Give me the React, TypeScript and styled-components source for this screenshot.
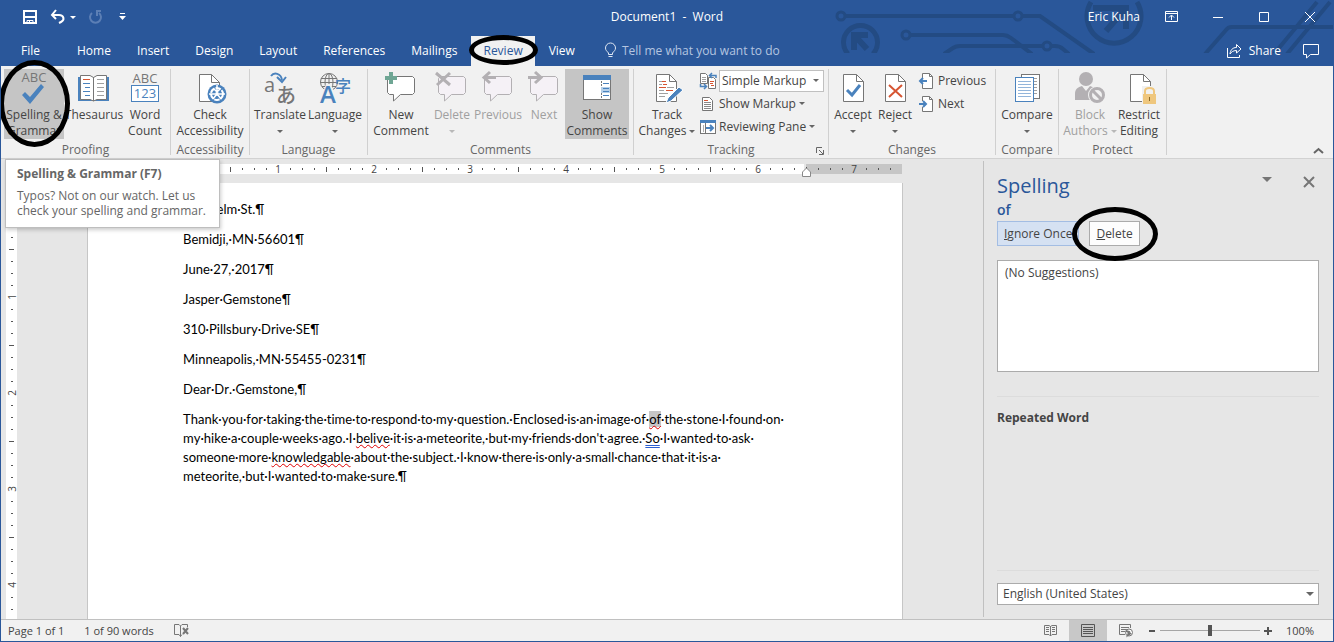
import React from "react";
import styled, { createGlobalStyle } from "styled-components";

const blue = "#2a579a";
const accent = "#4a82bd";
const grey = "#767676";

const GlobalStyle = createGlobalStyle`
  *, *::before, *::after { box-sizing: border-box; }
  body { margin: 0; }
  body, button, select, input {
    font-family: "Open Sans", "Noto Sans", sans-serif;
    font-size: 12px;
    line-height: 16px;
    color: #444;
  }
  button { background: none; border: 0; padding: 0; margin: 0; white-space: nowrap; }
  h1, h2, h3, p { margin: 0; font-weight: 400; }
  svg { display: block; flex: none; overflow: visible; }
`;

/* ---------- window and title bar ---------- */

const Window = styled.div`
  min-height: 100vh;
  display: flex;
  flex-direction: column;
  border: solid ${blue};
  border-width: 0 1px 1px;
  background: #e6e6e6;
  position: relative;
  overflow: hidden;
`;

const Header = styled.header`
  background: ${blue};
  position: relative;
`;

const Circuit = styled.svg`
  position: absolute;
  top: 0;
  right: -1px;
  overflow: hidden;
`;

const TitleBar = styled.div`
  position: relative;
  display: grid;
  grid-template-columns: 1fr auto 1fr;
  align-items: center;
  height: 34px;
`;

const QuickAccess = styled.div`
  display: flex;
  align-items: center;
  gap: 12px;
  padding-left: 21px;
`;

const Title = styled.h1`
  color: #fff;
  font-size: 12px;
  white-space: pre;
`;

const WindowControls = styled.div`
  display: flex;
  align-items: center;
  justify-content: flex-end;
`;

const Account = styled.button`
  color: #fff;
  margin-right: 9px;
`;

const WindowButton = styled.button`
  display: grid;
  place-items: center;
  width: 46px;
  height: 32px;
`;

const TabRow = styled.div`
  position: relative;
  display: flex;
  gap: 2px;
  height: 32px;
  padding: 2px 13px 0 0;
`;

const Tab = styled.button<{ $active?: boolean; $wide?: boolean }>`
  position: relative;
  color: ${(p) => (p.$active ? blue : "#fff")};
  background: ${(p) => (p.$active ? "#f1f1f1" : "transparent")};
  padding: 0 ${(p) => (p.$wide ? 20 : 12)}px;
  margin-right: ${(p) => (p.$wide ? 3 : 0)}px;
`;

const TellMe = styled.button`
  display: flex;
  align-items: center;
  gap: 6px;
  margin-left: 16px;
  color: #b4c5e0;
`;

const TabActions = styled.div`
  display: flex;
  align-items: center;
  gap: 22px;
  margin-left: auto;
`;

const ShareButton = styled.button`
  display: flex;
  align-items: center;
  gap: 7px;
  color: #fff;
`;

/* ---------- ribbon ---------- */

const Ribbon = styled.div`
  position: relative;
  display: flex;
  height: 93px;
  padding-top: 3px;
  background: #f1f1f1;
  border-bottom: 1px solid #d2d2d2;
`;

const Group = styled.section<{ $width: number }>`
  position: relative;
  flex: none;
  width: ${(p) => p.$width}px;
  height: 86px;
  padding: 0 3px;
  border-right: 1px solid #d0d0d0;
`;

const GroupItems = styled.div<{ $center?: boolean }>`
  display: flex;
  height: 70px;
  justify-content: ${(p) => (p.$center ? "center" : "flex-start")};
`;

const GroupName = styled.h2`
  height: 16px;
  margin-top: 3px;
  font-size: 12px;
  text-align: center;
  color: #666;
`;

const BigButton = styled.button<{ $width: number; $on?: boolean }>`
  position: relative;
  display: flex;
  flex-direction: column;
  align-items: center;
  flex: none;
  width: ${(p) => p.$width}px;
  height: 70px;
  padding-top: 3px;
  background: ${(p) => (p.$on ? "#c5c5c5" : "transparent")};
  &:disabled { color: #a0a0a0; }
`;

const BigLabel = styled.span`
  display: flex;
  flex-direction: column;
  align-items: center;
  margin-top: 3px;
`;

const LabelLine = styled.span`
  display: flex;
  align-items: center;
  justify-content: center;
  gap: 3px;
  height: 16px;
`;

const SmallColumn = styled.div`
  display: flex;
  flex-direction: column;
  padding-left: 3px;
`;

const SmallRow = styled.div`
  display: flex;
  align-items: center;
  gap: 3px;
  height: 23px;
`;

const SmallButton = styled.button<{ $gap?: number }>`
  display: flex;
  align-items: center;
  gap: ${(p) => p.$gap ?? 3}px;
`;

const SelectBox = styled.div<{ $tone: string }>`
  position: relative;
  display: flex;
  align-items: center;
  background: #fff;
  border: 1px solid ${(p) => p.$tone};
`;

const Select = styled.select<{ $inset: number }>`
  appearance: none;
  width: 100%;
  height: 20px;
  padding: 0 16px 0 ${(p) => p.$inset}px;
  border: 0;
  background: transparent;
  color: #444;
`;

const SelectArrow = styled.span`
  position: absolute;
  right: 4px;
  pointer-events: none;
`;

const Launcher = styled.button`
  position: absolute;
  right: 4px;
  bottom: 0;
`;

const CollapseButton = styled.button`
  align-self: flex-end;
  margin: 0 10px 4px auto;
`;

const Ring = styled.span<{ $x: number; $y: number; $w: number; $h: number }>`
  position: absolute;
  left: ${(p) => p.$x}px;
  top: ${(p) => p.$y}px;
  width: ${(p) => p.$w}px;
  height: ${(p) => p.$h}px;
  border: 5px solid #000;
  border-radius: 50%;
  pointer-events: none;
  z-index: 3;
`;

const Tooltip = styled.div`
  position: absolute;
  top: 93px;
  left: 4px;
  z-index: 2;
  width: 215px;
  height: 69px;
  padding: 6px 11px;
  background: #fff;
  border: 1px solid #bebebe;
  box-shadow: 1px 2px 4px rgba(0, 0, 0, 0.2);
  color: #666;
  line-height: 15px;
  white-space: nowrap;
`;

const TooltipTitle = styled.h3`
  font-size: 12px;
  font-weight: 700;
  line-height: 16px;
  margin-bottom: 6px;
`;

/* ---------- document ---------- */

const Body = styled.div`
  flex: 1;
  display: flex;
  min-height: 0;
`;

const Workspace = styled.main`
  flex: 1;
  display: flex;
  padding-left: 5px;
`;

const VerticalRuler = styled.div`
  width: 11px;
  flex: none;
  margin-top: 24px;
  padding-top: 12px;
  background: #fff;
`;

const Canvas = styled.div`
  flex: 1;
  display: flex;
  flex-direction: column;
  align-items: center;
  padding: 5px 10px 0 0;
`;

const HorizontalRuler = styled.div`
  position: relative;
  display: flex;
  width: 814px;
  height: 10px;
  padding-left: 4px;
  background: linear-gradient(to right, #c6c6c6 95px, #fff 95px 716px, #e6e6e6 716px 718px, #c6c6c6 718px);
`;

const Tick = styled.span<{ $vertical?: boolean }>`
  display: grid;
  place-items: center;
  flex: none;
  width: ${(p) => (p.$vertical ? 11 : 12)}px;
  height: ${(p) => (p.$vertical ? 12 : 10)}px;
  font-size: 10px;
  line-height: 10px;
  color: #444;
`;

const TurnedNumber = styled.span`
  transform: rotate(-90deg);
`;

const TickMark = styled.i<{ $w: number; $h: number }>`
  width: ${(p) => p.$w}px;
  height: ${(p) => p.$h}px;
  background: #555;
`;

const IndentMarker = styled.svg`
  position: absolute;
  right: 91px;
  top: 3px;
`;

const Page = styled.article`
  flex: 1;
  width: 816px;
  margin-top: 9px;
  padding: 17px 0 0 95px;
  background: #fff;
  border: solid #c6c6c6;
  border-width: 0 1px;
  font-family: Lato, "Open Sans", sans-serif;
  font-size: 13px;
  font-kerning: none;
  font-variant-ligatures: none;
  line-height: 19px;
  color: #000;
  white-space: nowrap;
`;

const Paragraph = styled.p`
  margin-bottom: 11px;
`;

const Misspelt = styled.span<{ $selected?: boolean }>`
  background: ${(p) => (p.$selected ? "#c6c6c6" : "transparent")};
  text-decoration: underline wavy #e00000 1px;
  text-underline-offset: 1px;
  text-decoration-skip-ink: none;
`;

const GrammarError = styled.span`
  text-decoration: underline double #2b5fd0 1px;
  text-underline-offset: 2px;
`;

/* ---------- spelling pane ---------- */

const Pane = styled.aside`
  flex: none;
  display: flex;
  flex-direction: column;
  width: 350px;
  margin: 2px 0;
  padding: 11px 14px 12px 13px;
  border-left: 1px solid #c0c0c0;
`;

const PaneHeader = styled.div`
  display: flex;
  align-items: flex-start;
  height: 28px;
  padding-right: 1px;
`;

const PaneTitle = styled.h2`
  flex: 1;
  font-size: 20px;
  line-height: 28px;
  color: ${blue};
`;

const PaneIcon = styled.button`
  padding: 5px 4px;
  margin-left: 24px;
`;

const Word = styled.h3`
  margin-top: 1px;
  font-size: 14px;
  font-weight: 600;
  line-height: 18px;
  color: ${blue};
`;

const PaneActions = styled.div`
  position: relative;
  display: flex;
  gap: 10px;
  margin-top: 2px;
`;

const ActionButton = styled.button<{ $primary?: boolean }>`
  height: 25px;
  padding: 0 6px;
  background: ${(p) => (p.$primary ? "#d5e1f2" : "#fdfdfd")};
  border: 1px solid ${(p) => (p.$primary ? "#a3bde3" : "#ababab")};
`;

const SuggestionList = styled.ul`
  height: 112px;
  margin: 14px 0 24px;
  padding: 4px 7px;
  list-style: none;
  background: #fff;
  border: 1px solid #ababab;
`;

const Explanation = styled.div`
  flex: 1;
  padding-top: 13px;
  border: solid #dcdcdc;
  border-width: 1px 0;
  margin-bottom: 12px;
`;

const ExplanationTitle = styled.h3`
  font-size: 12px;
  font-weight: 700;
`;

/* ---------- status bar ---------- */

const StatusBar = styled.footer`
  display: flex;
  align-items: center;
  height: 22px;
  padding: 0 19px 0 7px;
  background: #f1f1f1;
  border-top: 1px solid #c0c0c0;
  font-size: 11px;
  color: #555;
`;

const StatusItem = styled.button`
  font-size: 11px;
  margin-right: 20px;
`;

const ViewButton = styled.button<{ $on?: boolean }>`
  display: grid;
  place-items: center;
  width: 38px;
  height: 21px;
  background: ${(p) => (p.$on ? "#c8c8c8" : "transparent")};
`;

const Views = styled.div`
  display: flex;
  margin-left: auto;
`;

const Zoom = styled.div`
  display: flex;
  align-items: center;
  gap: 4px;
`;

const ZoomRange = styled.input`
  appearance: none;
  width: 100px;
  height: 12px;
  margin: 0;
  background: linear-gradient(#a6a6a6, #a6a6a6) center / 100% 1px no-repeat;
  &::-webkit-slider-thumb {
    appearance: none;
    width: 4px;
    height: 11px;
    background: #555;
  }
`;

const ZoomValue = styled.button`
  width: 38px;
  text-align: right;
  font-size: 11px;
`;

/* ---------- icons ---------- */

const Caret = ({ color = "#666", w = 6 }: { color?: string; w?: number }) => (
  <svg width={w} height={w / 2} viewBox="0 0 6 3"><path d="M0 0H6L3 3Z" fill={color} /></svg>
);

const Big = ({ children }: { children: React.ReactNode }) => (
  <svg width="32" height="32" viewBox="0 0 32 32" fill="none">{children}</svg>
);

const Doc = ({ stroke = grey }: { stroke?: string }) => (
  <>
    <path d="M6.5 2.5H19.5L26.5 9.5V29.5H6.5Z" fill="#fff" stroke={stroke} />
    <path d="M19.5 2.5V9.5H26.5" stroke={stroke} />
  </>
);

const SpellingIcon = () => (
  <Big>
    <text x="16" y="10" textAnchor="middle" fontSize="13" fill={grey}>ABC</text>
    <path d="M4 23L7 20L12 25L23 12L26 15L12 32Z" fill={accent} />
  </Big>
);

const ThesaurusIcon = () => (
  <Big>
    <path d="M0 5H31V29H0Z" fill={accent} />
    <path d="M2.5 3.5H12L15.5 5.5L19 3.5H28.5V27.5H19L15.5 29L12 27.5H2.5Z" fill="#fff" stroke={grey} />
    <path d="M15.5 5V29" stroke={grey} />
    <path d="M5 7.5H12" stroke="#d65532" />
    <path d="M5 11.5H12M7 15.5H12M5 19.5H12M7 23.5H12" stroke={accent} />
    <path d="M19 7.5H26M19 11.5H26M19 15.5H26M19 19.5H26M19 23.5H26" stroke="#a0a0a0" />
  </Big>
);

const WordCountIcon = () => (
  <Big>
    <text x="16" y="11" textAnchor="middle" fontSize="13" fill={grey}>ABC</text>
    <rect x="2.5" y="13.5" width="27" height="16" fill="#fff" stroke={accent} />
    <text x="16" y="26" textAnchor="middle" fontSize="13" fill={accent}>123</text>
  </Big>
);

const AccessibilityIcon = () => (
  <Big>
    <path d="M5.5 2.5H17.5L25.5 10.5V29.5H5.5Z" fill="#fff" stroke={grey} />
    <path d="M17.5 2.5V10.5H25.5" stroke={grey} />
    <circle cx="23" cy="22" r="9.5" fill={accent} />
    <circle cx="23" cy="22" r="6" stroke="#fff" strokeWidth="2" strokeDasharray="5.5 1" />
    <path d="M23 13V19M20 17L23 20L26 17M15 22H21M25 22H31M19 27L22 23M27 27L24 23" stroke="#fff" strokeWidth="1.500" />
    <circle cx="23" cy="22" r="2" fill="#fff" />
  </Big>
);

const TranslateIcon = () => (
  <Big>
    <text x="0" y="20" fontSize="20" fill={grey}>a</text>
    <text x="12" y="31" fontSize="20" fill={grey} fontFamily="'Noto Sans CJK JP', sans-serif" fontWeight="500">あ</text>
    <path d="M7 4C10 0 17 1 18 8" stroke={accent} strokeWidth="2" />
    <path d="M13 5L18 10L22 5" stroke={accent} strokeWidth="2" />
  </Big>
);

const LanguageIcon = () => (
  <Big>
    <circle cx="10" cy="10" r="8.5" stroke={grey} />
    <ellipse cx="10" cy="10" rx="4" ry="8.5" stroke={grey} />
    <path d="M10 2V18M2 6.500H18M1 10.500H19M3 14.500H17" stroke={grey} />
    <path d="M0 32L7 12H12L19 32Z" fill="#f1f1f1" />
    <text x="9" y="31" textAnchor="middle" fontSize="24" fontWeight="600" fill={accent}>A</text>
    <text x="16" y="20" fontSize="16" fill={accent} fontFamily="'Noto Sans CJK JP', sans-serif" fontWeight="500">字</text>
  </Big>
);

const Bubble = ({ stroke, fill }: { stroke: string; fill: string }) => (
  <path d="M4.500 4.500H27.500L29.500 6.500V20.500L27.500 22.500H15.500L8.500 29V22.500H4.500L2.500 20.500V6.500Z" fill={fill} stroke={stroke} />
);

const NewCommentIcon = () => (
  <Big>
    <Bubble stroke={grey} fill="#fff" />
    <path d="M4 0H8V4H12V8H8V12H4V8H0V4H4Z" fill="#6fa694" />
  </Big>
);

const fade = "#b3b0b3";

const DeleteCommentIcon = () => (
  <Big>
    <Bubble stroke={fade} fill="#f5f1f6" />
    <path d="M0 1L14 13M14 1L1 13" stroke={fade} strokeWidth="3" />
  </Big>
);

const PreviousCommentIcon = () => (
  <Big>
    <Bubble stroke={fade} fill="#f5f1f6" />
    <path d="M8 0L2 5.500L8 11M2 5.500H14" stroke={fade} strokeWidth="3" />
  </Big>
);

const NextCommentIcon = () => (
  <Big>
    <Bubble stroke={fade} fill="#f5f1f6" />
    <path d="M7 0L13 5.500L7 11M13 5.500H0" stroke={fade} strokeWidth="3" />
  </Big>
);

const ShowCommentsIcon = () => (
  <Big>
    <rect x="2.500" y="3.500" width="27" height="24" fill="#fff" stroke={grey} />
    <rect x="2" y="3" width="28" height="5" fill={accent} />
    <path d="M20.500 9V27" stroke={grey} strokeDasharray="2 1" />
    <rect x="20" y="15" width="9" height="6" fill="#b5cfe8" />
    <path d="M22 11.500H28M22 16.500H28M22 19.500H28M22 23.500H28" stroke={accent} />
  </Big>
);

const TrackIcon = () => (
  <Big>
    <path d="M5.500 2.500H18.500L25.500 9.500V29.500H5.500Z" fill="#fff" stroke={grey} />
    <path d="M18.500 2.500V9.500H25.500" stroke={grey} />
    <path d="M8 9.500H15M8 12.500H11M16 15.500H23M8 18.500H13M8 21.500H17M8 24.500H14" stroke="#a0a0a0" />
    <path d="M11 9.500H15M12 12.500H16M8 15.500H15M15 18.500H22" stroke="#d65532" />
    <path d="M15 31L17 26L28 15L32 18L20 29Z" fill={accent} stroke="#fff" strokeWidth="1" />
  </Big>
);

const AcceptIcon = () => (
  <Big><Doc /><path d="M10 18L15 23L23 13" stroke={accent} strokeWidth="3" /></Big>
);

const RejectIcon = () => (
  <Big><Doc /><path d="M10 13L23 25M23 13L10 25" stroke="#d65532" strokeWidth="2" /></Big>
);

const CompareIcon = () => (
  <Big>
    <rect x="10.500" y="2.500" width="18" height="24" fill="#fff" stroke={grey} />
    <path d="M12 6.500H26M12 9.500H26M12 12.500H26M12 15.500H26M12 18.500H26M12 21.500H26" stroke="#a0a0a0" />
    <rect x="4.500" y="5.500" width="18" height="24" fill="#fff" stroke={accent} />
    <path d="M7 9.500H20M7 12.500H20M7 15.500H20M7 18.500H20M7 21.500H20M7 24.500H20" stroke="#93b5da" />
  </Big>
);

const BlockIcon = () => (
  <Big>
    <circle cx="12" cy="7" r="7" fill={fade} />
    <path d="M1 28V22C1 17 4 15 8 14L12 19L16 14L21 16V28Z" fill={fade} />
    <circle cx="23" cy="23" r="9" fill="#f1f1f1" />
    <circle cx="23" cy="23" r="6.500" stroke={fade} strokeWidth="3" />
    <path d="M18 18L28 28" stroke={fade} strokeWidth="3" />
  </Big>
);

const RestrictIcon = () => (
  <Big>
    <path d="M7.500 2.500H20.500L27.500 9.500V29.500H7.500Z" fill="#fff" stroke={grey} />
    <path d="M20.500 2.500V9.500H27.500" stroke={grey} />
    <rect x="19" y="14" width="14" height="18" fill="#f1f1f1" />
    <rect x="20" y="22" width="13" height="10" fill="#efc77e" />
    <path d="M22 22V19C22 15 31 15 31 19V22" stroke="#efc77e" strokeWidth="2" />
    <path d="M26.500 25V29" stroke="#8a6a2a" strokeWidth="1" />
  </Big>
);

const Small = ({ children }: { children: React.ReactNode }) => (
  <svg width="16" height="16" viewBox="0 0 16 16" fill="none">{children}</svg>
);

const MarkupViewIcon = () => (
  <Small>
    <path d="M0.500 0.500H5.500L7.500 2.500V10.500H0.500Z" fill="#fff" stroke={grey} />
    <path d="M2 4.500H6M2 6.500H6M2 8.500H6" stroke="#a0a0a0" />
    <path d="M8.500 4.500H13.500L15.500 6.500V15.500H8.500Z" fill="#fff" stroke={grey} />
    <path d="M10 8.500H14M10 10.500H13M11 12.500H14" stroke="#d65532" />
    <path d="M16 5V2.500H10M12 0L9.500 2.500L12 5M0.500 11V13.500H6M4 11L6.500 13.500L4 16" stroke={accent} strokeWidth="1.500" />
  </Small>
);

const ShowMarkupIcon = () => (
  <Small>
    <path d="M2.500 1.500H9.500L12.500 4.500V14.500H2.500Z" fill="#fff" stroke={grey} />
    <path d="M4 4.500H8" stroke="#d65532" />
    <path d="M4 6.500H11M4 8.500H11M4 10.500H11M4 12.500H11" stroke="#888" />
  </Small>
);

const ReviewingPaneIcon = () => (
  <Small>
    <rect x="0.500" y="1.500" width="15" height="13" fill="#fff" stroke={grey} />
    <rect x="0" y="1" width="16" height="3" fill={accent} />
    <path d="M5.500 4V14" stroke={grey} />
    <path d="M3.500 6V13" stroke="#b0b0b0" />
    <path d="M6 9H12M10 6L13 9L10 12" stroke={accent} strokeWidth="2" />
  </Small>
);

const PreviousChangeIcon = () => (
  <Small>
    <path d="M3.500 5V0.500H10.500L13.500 3.500V15.500H3.500V11" fill="#fff" stroke={grey} />
    <path d="M10.500 0.500V3.500H13.500" stroke={grey} />
    <path d="M8 8H2M4 5L1 8L4 11" stroke={accent} strokeWidth="2" />
  </Small>
);

const NextChangeIcon = () => (
  <Small>
    <path d="M3.500 5V0.500H10.500L13.500 3.500V15.500H3.500V11" fill="#fff" stroke={grey} />
    <path d="M10.500 0.500V3.500H13.500" stroke={grey} />
    <path d="M0 8H6M4 5L7 8L4 11" stroke={accent} strokeWidth="2" />
  </Small>
);

/* ---------- composite parts ---------- */

type CommandProps = {
  icon: React.ReactNode;
  lines: string[];
  width: number;
  on?: boolean;
  disabled?: boolean;
  menu?: boolean;
};

const Command = ({ icon, lines, width, on, disabled, menu }: CommandProps) => {
  const caret = menu && <Caret color={disabled ? "#b8b8b8" : "#666"} />;
  return (
    <BigButton $width={width} $on={on} disabled={disabled}>
      {icon}
      <BigLabel>
        <LabelLine>{lines[0]}</LabelLine>
        <LabelLine>{lines[1]}{caret}</LabelLine>
      </BigLabel>
    </BigButton>
  );
};

const range = (from: number, to: number) => Array.from({ length: to - from + 1 }, (_, i) => from + i);

const RulerTick = ({ at, vertical }: { at: number; vertical?: boolean }) => {
  if (at !== 0 && at % 8 === 0) {
    const n = Math.abs(at / 8);
    return <Tick $vertical={vertical}>{vertical ? <TurnedNumber>{n}</TurnedNumber> : n}</Tick>;
  }
  const length = at % 4 === 0 ? 5 : 2;
  return (
    <Tick $vertical={vertical}>
      <TickMark $w={vertical ? length : 1} $h={vertical ? 1 : length} />
    </Tick>
  );
};

const address = [
  "1500·elm·St.¶",
  "Bemidji,·MN·56601¶",
  "June·27,·2017¶",
  "Jasper·Gemstone¶",
  "310·Pillsbury·Drive·SE¶",
  "Minneapolis,·MN·55455-0231¶",
  "Dear·Dr.·Gemstone,¶",
];

export default function App() {
  return (
    <Window>
      <GlobalStyle />
      <Header>
        <Circuit width="554" height="53" viewBox="0 0 554 53" fill="none" stroke="#234b83" strokeWidth="4">
          <g strokeWidth="3">
            <circle cx="61" cy="16" r="4" />
            <circle cx="238" cy="16" r="4" />
            <circle cx="126" cy="35" r="4" />
            <circle cx="267" cy="46" r="4" />
          </g>
          <path d="M65 16H234M242 16H260L314 54M130 35H223Q227 35 231 38L252 54M164 54L173 48Q176 46 180 46H263M271 46H275Q280 46 283 49L289 54" />
          <path d="M68 54A17 17 0 1 1 93 54M311 2A27 27 0 1 0 357 2" strokeWidth="5" />
          <path d="M74 50V35H88M75 36L87 49M313 8H346V29M344 10L326 31" strokeWidth="6" />
          <path d="M425 54L446 30Q448 27 452 27H554M494 54L537 2M507 54L550 2" />
        </Circuit>
        <TitleBar>
          <QuickAccess>
            <button aria-label="Save">
              <svg width="16" height="16" viewBox="0 0 16 16" fill="none" stroke="#fff">
                <path d="M2 2H14V14H2Z" strokeWidth="2" />
                <path d="M2 8H14" strokeWidth="2" />
                <path d="M5 14V11.500H11V14" strokeWidth="1" /><path d="M7.500 11V14" strokeWidth="1" />
              </svg>
            </button>
            <SmallButton aria-label="Undo" $gap={5}>
              <svg width="15" height="14" viewBox="0 0 15 14" fill="none" stroke="#fff" strokeWidth="2">
                <path d="M6 0L2 5L6 9M2 5H9C14 5 15 10 11 12L9 13" />
              </svg>
              <Caret color="#fff" />
            </SmallButton>
            <button aria-label="Repeat">
              <svg width="15" height="15" viewBox="0 0 15 15" fill="none" stroke="#5c7fb5" strokeWidth="2">
                <path d="M4 3A5.500 5.500 0 1 0 11 3M8 1H13M9 1V6" />
              </svg>
            </button>
            <button aria-label="Customize Quick Access Toolbar">
              <svg width="16" height="8" viewBox="0 0 16 8" fill="#fff"><path d="M5 0H10V1H5ZM4 3H11L7.500 7Z" /></svg>
            </button>
          </QuickAccess>
          <Title>{"Document1  -  Word"}</Title>
          <WindowControls>
            <Account>Eric Kuha</Account>
            <WindowButton aria-label="Ribbon Display Options">
              <svg width="14" height="12" viewBox="0 0 14 12" fill="none" stroke="#fff">
                <path d="M0.500 0.500H12.500V10.500H0.500ZM0.500 2.500H12.500M6.500 9V4.500M4 6.500L6.500 4L9 6.500" />
              </svg>
            </WindowButton>
            <WindowButton aria-label="Minimize">
              <svg width="10" height="1"><path d="M0 0H10V1H0Z" fill="#fff" /></svg>
            </WindowButton>
            <WindowButton aria-label="Maximize">
              <svg width="10" height="10" fill="none" stroke="#fff"><path d="M0.500 0.500H9.500V9.500H0.500Z" /></svg>
            </WindowButton>
            <WindowButton aria-label="Close">
              <svg width="10" height="10" fill="none" stroke="#fff"><path d="M0 0L10 10M10 0L0 10" /></svg>
            </WindowButton>
          </WindowControls>
        </TitleBar>
        <TabRow>
          <Tab $wide>File</Tab>
          {["Home", "Insert", "Design", "Layout", "References", "Mailings"].map((t) => <Tab key={t}>{t}</Tab>)}
          <Tab $active>Review<Ring $x={-2} $y={-1} $w={69} $h={30} /></Tab>
          <Tab>View</Tab>
          <TellMe>
            <svg width="11" height="16" viewBox="0 0 11 16" fill="none" stroke="#dfe7f3">
              <path d="M3.500 11.500V10C2 8 0.500 7.500 0.500 5A4.800 4.800 0 0 1 10.500 5C10.500 7.500 9 8 7.500 10V11.500ZM3.500 13.500H7.500" />
            </svg>
            Tell me what you want to do
          </TellMe>
          <TabActions>
            <ShareButton>
              <svg width="15" height="15" viewBox="0 0 15 15" fill="none" stroke="#fff">
                <path d="M0.500 4V13.500H12.500V11M9.500 0.500L14 5L9.500 9V6.500C6 6.500 4.500 8 3 10C3.500 6 5.500 3.500 9.500 3.500Z" />
              </svg>
              Share
            </ShareButton>
            <button aria-label="Comments">
              <svg width="17" height="15" viewBox="0 0 17 15" fill="none" stroke="#fff"><path d="M0.500 0.500H15.500V10.500H7.500L3.500 14V10.500H0.500Z" /></svg>
            </button>
          </TabActions>
        </TabRow>
      </Header>

      <Ribbon>
        <Group $width={170}>
          <GroupItems>
            <Command width={60} on icon={<SpellingIcon />} lines={["Spelling &", "Grammar"]} />
            <Command width={60} icon={<ThesaurusIcon />} lines={["Thesaurus", ""]} />
            <Command width={42} icon={<WordCountIcon />} lines={["Word", "Count"]} />
          </GroupItems>
          <GroupName>Proofing</GroupName>
        </Group>
        <Group $width={79}>
          <GroupItems $center>
            <Command width={70} icon={<AccessibilityIcon />} lines={["Check", "Accessibility"]} />
          </GroupItems>
          <GroupName>Accessibility</GroupName>
        </Group>
        <Group $width={118}>
          <GroupItems>
            <Command width={54} menu icon={<TranslateIcon />} lines={["Translate", ""]} />
            <Command width={56} menu icon={<LanguageIcon />} lines={["Language", ""]} />
          </GroupItems>
          <GroupName>Language</GroupName>
        </Group>
        <Group $width={266}>
          <GroupItems>
            <Command width={60} icon={<NewCommentIcon />} lines={["New", "Comment"]} />
            <Command width={42} disabled menu icon={<DeleteCommentIcon />} lines={["Delete", ""]} />
            <Command width={50} disabled icon={<PreviousCommentIcon />} lines={["Previous", ""]} />
            <Command width={42} disabled icon={<NextCommentIcon />} lines={["Next", ""]} />
            <Command width={64} on icon={<ShowCommentsIcon />} lines={["Show", "Comments"]} />
          </GroupItems>
          <GroupName>Comments</GroupName>
        </Group>
        <Group $width={195}>
          <GroupItems>
            <Command width={60} menu icon={<TrackIcon />} lines={["Track", "Changes"]} />
            <SmallColumn>
              <SmallRow>
                <MarkupViewIcon />
                <SelectBox $tone="#c0c0c0">
                  <Select $inset={2} aria-label="Display for Review"><option>Simple Markup</option></Select>
                  <SelectArrow><Caret /></SelectArrow>
                </SelectBox>
              </SmallRow>
              <SmallRow><SmallButton><ShowMarkupIcon />Show Markup<Caret /></SmallButton></SmallRow>
              <SmallRow>
                <SmallButton><ReviewingPaneIcon />Reviewing Pane</SmallButton>
                <SmallButton aria-label="Reviewing Pane options"><Caret /></SmallButton>
              </SmallRow>
            </SmallColumn>
          </GroupItems>
          <GroupName>Tracking</GroupName>
          <Launcher aria-label="Change Tracking Options">
            <svg width="8" height="8" viewBox="0 0 8 8" fill="none" stroke="#666"><path d="M0.500 6V0.500H6M3 3L7 7M7.500 3V7.500H3" /></svg>
          </Launcher>
        </Group>
        <Group $width={167}>
          <GroupItems>
            <Command width={42} menu icon={<AcceptIcon />} lines={["Accept", ""]} />
            <Command width={42} menu icon={<RejectIcon />} lines={["Reject", ""]} />
            <SmallColumn>
              <SmallRow><SmallButton><PreviousChangeIcon />Previous</SmallButton></SmallRow>
              <SmallRow><SmallButton><NextChangeIcon />Next</SmallButton></SmallRow>
            </SmallColumn>
          </GroupItems>
          <GroupName>Changes</GroupName>
        </Group>
        <Group $width={63}>
          <GroupItems $center>
            <Command width={56} menu icon={<CompareIcon />} lines={["Compare", ""]} />
          </GroupItems>
          <GroupName>Compare</GroupName>
        </Group>
        <Group $width={108}>
          <GroupItems>
            <Command width={56} disabled menu icon={<BlockIcon />} lines={["Block", "Authors"]} />
            <Command width={42} icon={<RestrictIcon />} lines={["Restrict", "Editing"]} />
          </GroupItems>
          <GroupName>Protect</GroupName>
        </Group>
        <CollapseButton aria-label="Collapse the Ribbon">
          <svg width="9" height="6" viewBox="0 0 9 6" fill="none" stroke="#666" strokeWidth="2"><path d="M0 5L4.500 1L9 5" /></svg>
        </CollapseButton>
        <Ring $x={-2} $y={-6} $w={71} $h={87} />
        <Tooltip role="tooltip">
          <TooltipTitle>Spelling &amp; Grammar (F7)</TooltipTitle>
          Typos? Not on our watch. Let us<br />check your spelling and grammar.
        </Tooltip>
      </Ribbon>

      <Body>
        <Workspace>
          <VerticalRuler>{range(0, 34).map((n) => <RulerTick key={n} at={n} vertical />)}</VerticalRuler>
          <Canvas>
            <HorizontalRuler>
              {range(-7, 59).map((n) => <RulerTick key={n} at={n} />)}
              <IndentMarker width="9" height="10" viewBox="0 0 9 10"><path d="M0.500 9.500V5L4.500 1L8.500 5V9.500Z" fill="#fff" stroke="#888" /></IndentMarker>
            </HorizontalRuler>
            <Page>
              {address.map((line) => <Paragraph key={line}>{line}</Paragraph>)}
              <Paragraph>
                Thank·you·for·taking·the·time·to·respond·to·my·question.·Enclosed·is·an·image·of·<Misspelt $selected>of</Misspelt>·the·stone·I·found·on·<br />
                my·hike·a·couple·weeks·ago.·I·<Misspelt>belive</Misspelt>·it·is·a·meteorite,·but·my·friends·don't·agree.·<GrammarError>So</GrammarError>·I·wanted·to·ask·<br />
                someone·more·<Misspelt>knowledgable</Misspelt>·about·the·subject.·I·know·there·is·only·a·small·chance·that·it·is·a·<br />
                meteorite,·but·I·wanted·to·make·sure.¶
              </Paragraph>
            </Page>
          </Canvas>
        </Workspace>
        <Pane>
          <PaneHeader>
            <PaneTitle>Spelling</PaneTitle>
            <PaneIcon aria-label="Task Pane Options"><Caret color={grey} w={10} /></PaneIcon>
            <PaneIcon aria-label="Close pane">
              <svg width="10" height="10" fill="none" stroke={grey} strokeWidth="2"><path d="M0 0L10 10M10 0L0 10" /></svg>
            </PaneIcon>
          </PaneHeader>
          <Word>of</Word>
          <PaneActions>
            <ActionButton $primary><u>I</u>gnore Once</ActionButton>
            <ActionButton><u>D</u>elete</ActionButton>
            <Ring $x={75} $y={-14} $w={86} $h={54} />
          </PaneActions>
          <SuggestionList><li>(No Suggestions)</li></SuggestionList>
          <Explanation><ExplanationTitle>Repeated Word</ExplanationTitle></Explanation>
          <SelectBox $tone="#ababab">
            <Select $inset={5} aria-label="Dictionary language"><option>English (United States)</option></Select>
            <SelectArrow><Caret w={8} /></SelectArrow>
          </SelectBox>
        </Pane>
      </Body>

      <StatusBar>
        <StatusItem>Page 1 of 1</StatusItem>
        <StatusItem>1 of 90 words</StatusItem>
        <StatusItem aria-label="Proofing errors">
          <svg width="15" height="13" viewBox="0 0 15 13" fill="none" stroke={grey}>
            <path d="M6.500 12.500L5 10.500H0.500V0.500H5L6.500 2V12.500L8 10.500M6.500 2L8 0.500H13.500V3" />
            <path d="M9 4L14 10M14 4L9 10" strokeWidth="2" />
          </svg>
        </StatusItem>
        <Views>
          <ViewButton aria-label="Read Mode">
            <svg width="13" height="13" viewBox="0 0 13 13" fill="none" stroke={grey}>
              <path d="M0.500 1.500H5L6.500 2.500L8 1.500H12.500V10.500H8L6.500 12L5 10.500H0.500ZM6.500 2V12M2 3.500H5M2 5.500H5M2 7.500H5M8 3.500H11M8 5.500H11M8 7.500H11" />
            </svg>
          </ViewButton>
          <ViewButton $on aria-label="Print Layout">
            <svg width="14" height="13" viewBox="0 0 14 13" fill="none" stroke="#555">
              <path d="M0.500 0.500H13.500V12.500H0.500ZM2 3.500H12M2 5.500H12M2 7.500H12M2 9.500H12" />
            </svg>
          </ViewButton>
          <ViewButton aria-label="Web Layout">
            <svg width="14" height="13" viewBox="0 0 14 13" fill="none" stroke={grey}>
              <path d="M6 10.500H0.500V0.500H11.500V4M2 3.500H10M2 5.500H8M2 7.500H6" />
              <circle cx="10" cy="8.500" r="3.500" fill="#fff" /><path d="M7 7L10 8L9 11L12 9" strokeWidth="2" />
            </svg>
          </ViewButton>
        </Views>
        <Zoom>
          <button aria-label="Zoom Out"><svg width="11" height="8"><path d="M4 3H10V5H4Z" fill="#555" /></svg></button>
          <ZoomRange type="range" min={0} max={100} defaultValue={50} aria-label="Zoom" />
          <button aria-label="Zoom In"><svg width="8" height="8"><path d="M3 0H5V3H8V5H5V8H3V5H0V3H3Z" fill="#555" /></svg></button>
          <ZoomValue>100%</ZoomValue>
        </Zoom>
      </StatusBar>
    </Window>
  );
}
